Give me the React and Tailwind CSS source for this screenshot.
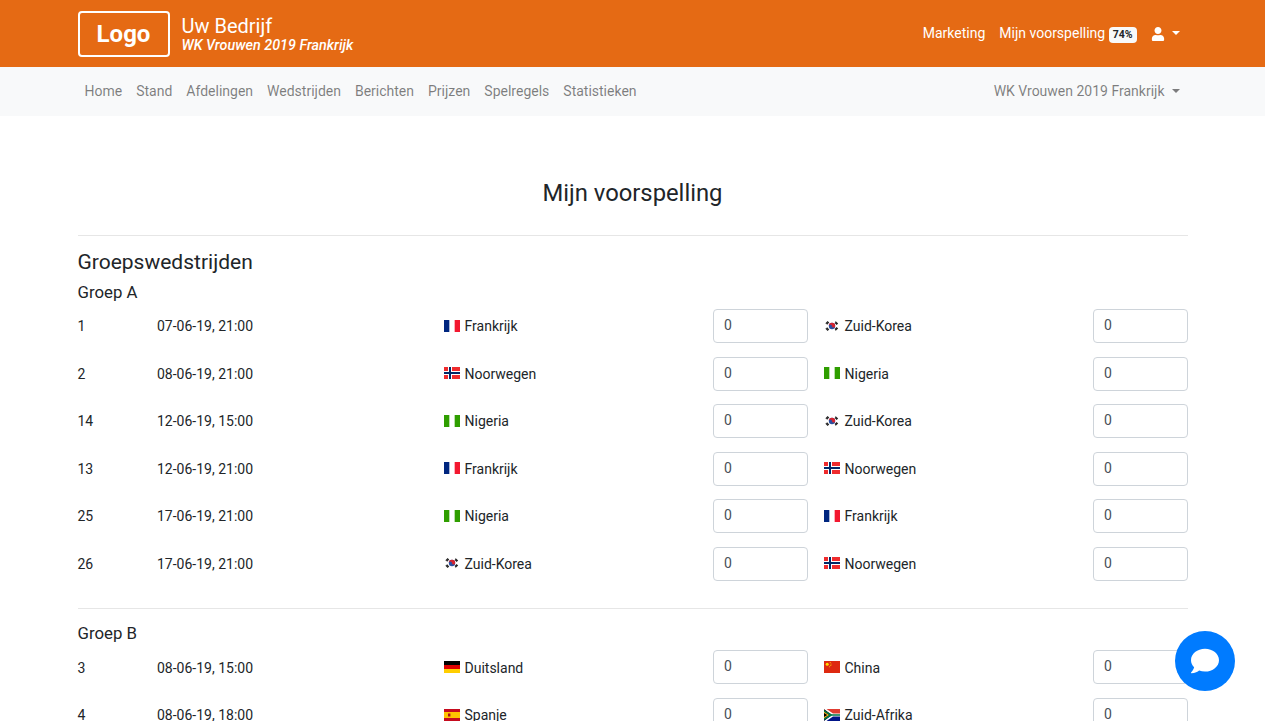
import { FaUser, FaComment } from 'react-icons/fa'

const navLinks = ['Home', 'Stand', 'Afdelingen', 'Wedstrijden', 'Berichten', 'Prijzen', 'Spelregels', 'Statistieken']

function Flag({ code }) {
  const box = { width: 16, height: 12, viewBox: '0 0 16 12', className: 'shrink-0 mb-[2px]' }
  if (code === 'fr') {
    return (
      <svg {...box}>
        <rect width="16" height="12" fill="#fff" />
        <rect width="5.33" height="12" fill="#00267f" />
        <rect x="10.67" width="5.33" height="12" fill="#f31830" />
      </svg>
    )
  }
  if (code === 'no') {
    return (
      <svg {...box}>
        <rect width="16" height="12" fill="#ef2b2d" />
        <rect x="4" width="4" height="12" fill="#fff" />
        <rect y="4" width="16" height="4" fill="#fff" />
        <rect x="5" width="2" height="12" fill="#002868" />
        <rect y="5" width="16" height="2" fill="#002868" />
      </svg>
    )
  }
  if (code === 'ng') {
    return (
      <svg {...box}>
        <rect width="16" height="12" fill="#fff" />
        <rect width="5.33" height="12" fill="#2f9e00" />
        <rect x="10.67" width="5.33" height="12" fill="#2f9e00" />
      </svg>
    )
  }
  if (code === 'kr') {
    return (
      <svg {...box}>
        <rect width="16" height="12" fill="#fff" />
        <g stroke="#222" strokeWidth="1.1">
          <path d="M1.8 3.6 4 1.4M2.8 4.4 4.8 2.2" />
          <path d="M11.4 1.6 13.8 3.8M11 2.6 13 4.6" />
          <path d="M1.8 8.4 4 10.6M2.8 7.6 4.8 9.8" />
          <path d="M11.4 10.4 13.8 8.2M11 9.4 13 7.4" />
        </g>
        <circle cx="8" cy="6" r="3.2" fill="#2a4fa0" />
        <path d="M4.8 6a3.2 3.2 0 0 1 6.4 0 1.6 1.6 0 0 1-3.2 0 1.6 1.6 0 0 0-3.2 0z" fill="#d5232f" />
      </svg>
    )
  }
  if (code === 'de') {
    return (
      <svg {...box}>
        <rect width="16" height="4" fill="#000" />
        <rect y="4" width="16" height="4" fill="#dd0000" />
        <rect y="8" width="16" height="4" fill="#ffce00" />
      </svg>
    )
  }
  if (code === 'cn') {
    return (
      <svg {...box}>
        <rect width="16" height="12" fill="#de2910" />
        <circle cx="3.2" cy="3.2" r="1.5" fill="#ffde00" />
        <circle cx="6.2" cy="1.5" r="0.5" fill="#ffde00" />
        <circle cx="7" cy="3" r="0.5" fill="#ffde00" />
        <circle cx="6.8" cy="4.6" r="0.5" fill="#ffde00" />
        <circle cx="5.6" cy="5.8" r="0.5" fill="#ffde00" />
      </svg>
    )
  }
  if (code === 'es') {
    return (
      <svg {...box}>
        <rect width="16" height="12" fill="#c60b1e" />
        <rect y="3" width="16" height="6" fill="#ffc400" />
        <rect x="4" y="4.5" width="2.4" height="3" fill="#ad1519" />
      </svg>
    )
  }
  // za
  return (
    <svg {...box}>
      <rect width="16" height="6" fill="#e03c31" />
      <rect y="6" width="16" height="6" fill="#001489" />
      <path d="M0 0 8 6 0 12z" fill="#000" />
      <path d="M0 0h2.5L9 4.4h7v3.2H9L2.500 12H0l8-6z" fill="#fff" />
      <path d="M0 1 7.600 5.200H16v1.600H7.600L0 11V9.200L5 6 0 2.800z" fill="#007749" />
      <path d="M0 2.800 5 6 0 9.200V8L3.200 6 0 4z" fill="#ffb81c" />
    </svg>
  )
}

function Team({ code, name }) {
  return (
    <div className="flex items-center gap-[5px] pt-[1.400px]">
      <Flag code={code} />
      <span>{name}</span>
    </div>
  )
}

function ScoreInput() {
  return (
    <input
      readOnly
      value="0"
      className="w-[95px] h-[34px] border border-[#ced4da] rounded-[4px] bg-white pl-[10.500px] pr-[10px] pb-[2px] text-[14px] text-[#495057] outline-none"
    />
  )
}

function Match({ nr, date, home, away }) {
  return (
    <div className="grid grid-cols-[79.5px_286.5px_269px_95px_16px_269px_95px] items-center h-[47.5px]">
      <div className="pt-[1.400px]">{nr}</div>
      <div className="pt-[1.400px]">{date}</div>
      <Team {...home} />
      <ScoreInput />
      <div />
      <Team {...away} />
      <ScoreInput />
    </div>
  )
}

const fr = { code: 'fr', name: 'Frankrijk' }
const kr = { code: 'kr', name: 'Zuid-Korea' }
const no = { code: 'no', name: 'Noorwegen' }
const ng = { code: 'ng', name: 'Nigeria' }
const de = { code: 'de', name: 'Duitsland' }
const cn = { code: 'cn', name: 'China' }
const es = { code: 'es', name: 'Spanje' }
const za = { code: 'za', name: 'Zuid-Afrika' }

const groupA = [
  { nr: 1, date: '07-06-19, 21:00', home: fr, away: kr },
  { nr: 2, date: '08-06-19, 21:00', home: no, away: ng },
  { nr: 14, date: '12-06-19, 15:00', home: ng, away: kr },
  { nr: 13, date: '12-06-19, 21:00', home: fr, away: no },
  { nr: 25, date: '17-06-19, 21:00', home: ng, away: fr },
  { nr: 26, date: '17-06-19, 21:00', home: kr, away: no },
]

const groupB = [
  { nr: 3, date: '08-06-19, 15:00', home: de, away: cn },
  { nr: 4, date: '08-06-19, 18:00', home: es, away: za },
]

export default function App() {
  return (
    <div className="h-screen overflow-hidden bg-white text-[14px] text-[#212529] font-['Roboto',sans-serif]">
      {/* Top bar */}
      <header className="bg-[#e56a14] h-[67px] text-white">
        <div className="w-[1110px] mx-auto h-full flex items-center justify-between">
          <div className="flex items-center gap-3">
            <div className="w-[92px] h-[46px] border-2 border-white rounded-[4px] flex items-center justify-center text-[24px] font-bold">
              Logo
            </div>
            <div>
              <div className="text-[20px] leading-[24px]">Uw Bedrijf</div>
              <div className="text-[14.350px] leading-[16px] italic font-medium">WK Vrouwen 2019 Frankrijk</div>
            </div>
          </div>
          <div className="flex items-center mr-2">
            <span>Marketing</span>
            <span className="ml-[14px]">Mijn voorspelling</span>
            <span className="ml-[3.500px] mt-[3px] bg-[#f8f9fa] text-[#212529] text-[10.5px] font-bold leading-none rounded-[4px] px-[4px] py-[2.500px]">74%</span>
            <FaUser className="ml-[14px] text-[14px]" />
            <span className="ml-[7px] mb-[2px] border-x-[4.200px] border-t-[4.200px] border-x-transparent border-t-white" />
          </div>
        </div>
      </header>

      {/* Nav */}
      <nav className="bg-[#f8f9fa] h-[49px] text-[#00000080]">
        <div className="w-[1110px] mx-auto h-full flex items-center justify-between px-[7px]">
          <div className="flex gap-[14px]">
            {navLinks.map(l => <span key={l}>{l}</span>)}
          </div>
          <div className="flex items-center gap-[7px] mr-[1px]">
            <span>WK Vrouwen 2019 Frankrijk</span>
            <span className="mb-[2px] border-x-[4.200px] border-t-[4.200px] border-x-transparent border-t-[#00000080]" />
          </div>
        </div>
      </nav>

      <main className="w-[1110px] mx-auto">
        <h1 className="text-[23.800px] leading-[29px] text-center font-normal mt-[63px]">Mijn voorspelling</h1>
        <hr className="border-t border-[#00000019] mt-[27px]" />
        <h2 className="text-[21px] leading-[24px] mt-[14px]">Groepswedstrijden</h2>
        <h3 className="text-[16.800px] leading-[19px] mt-[9px]">Groep A</h3>
        <div className="pt-[0.3px]">
          {groupA.map(m => <Match key={m.nr} {...m} />)}
        </div>
        <hr className="border-t border-[#00000019] mt-[21px]" />
        <h3 className="text-[16.800px] leading-[19px] mt-[15px]">Groep B</h3>
        <div className="pt-[0.3px]">
          {groupB.map(m => <Match key={m.nr} {...m} />)}
        </div>
      </main>

      {/* Chat button */}
      <div className="fixed right-[30px] bottom-[30px] w-[60px] h-[60px] rounded-full bg-[#007bff] flex items-center justify-center text-white">
        <FaComment className="text-[28px]" />
      </div>
    </div>
  )
}
